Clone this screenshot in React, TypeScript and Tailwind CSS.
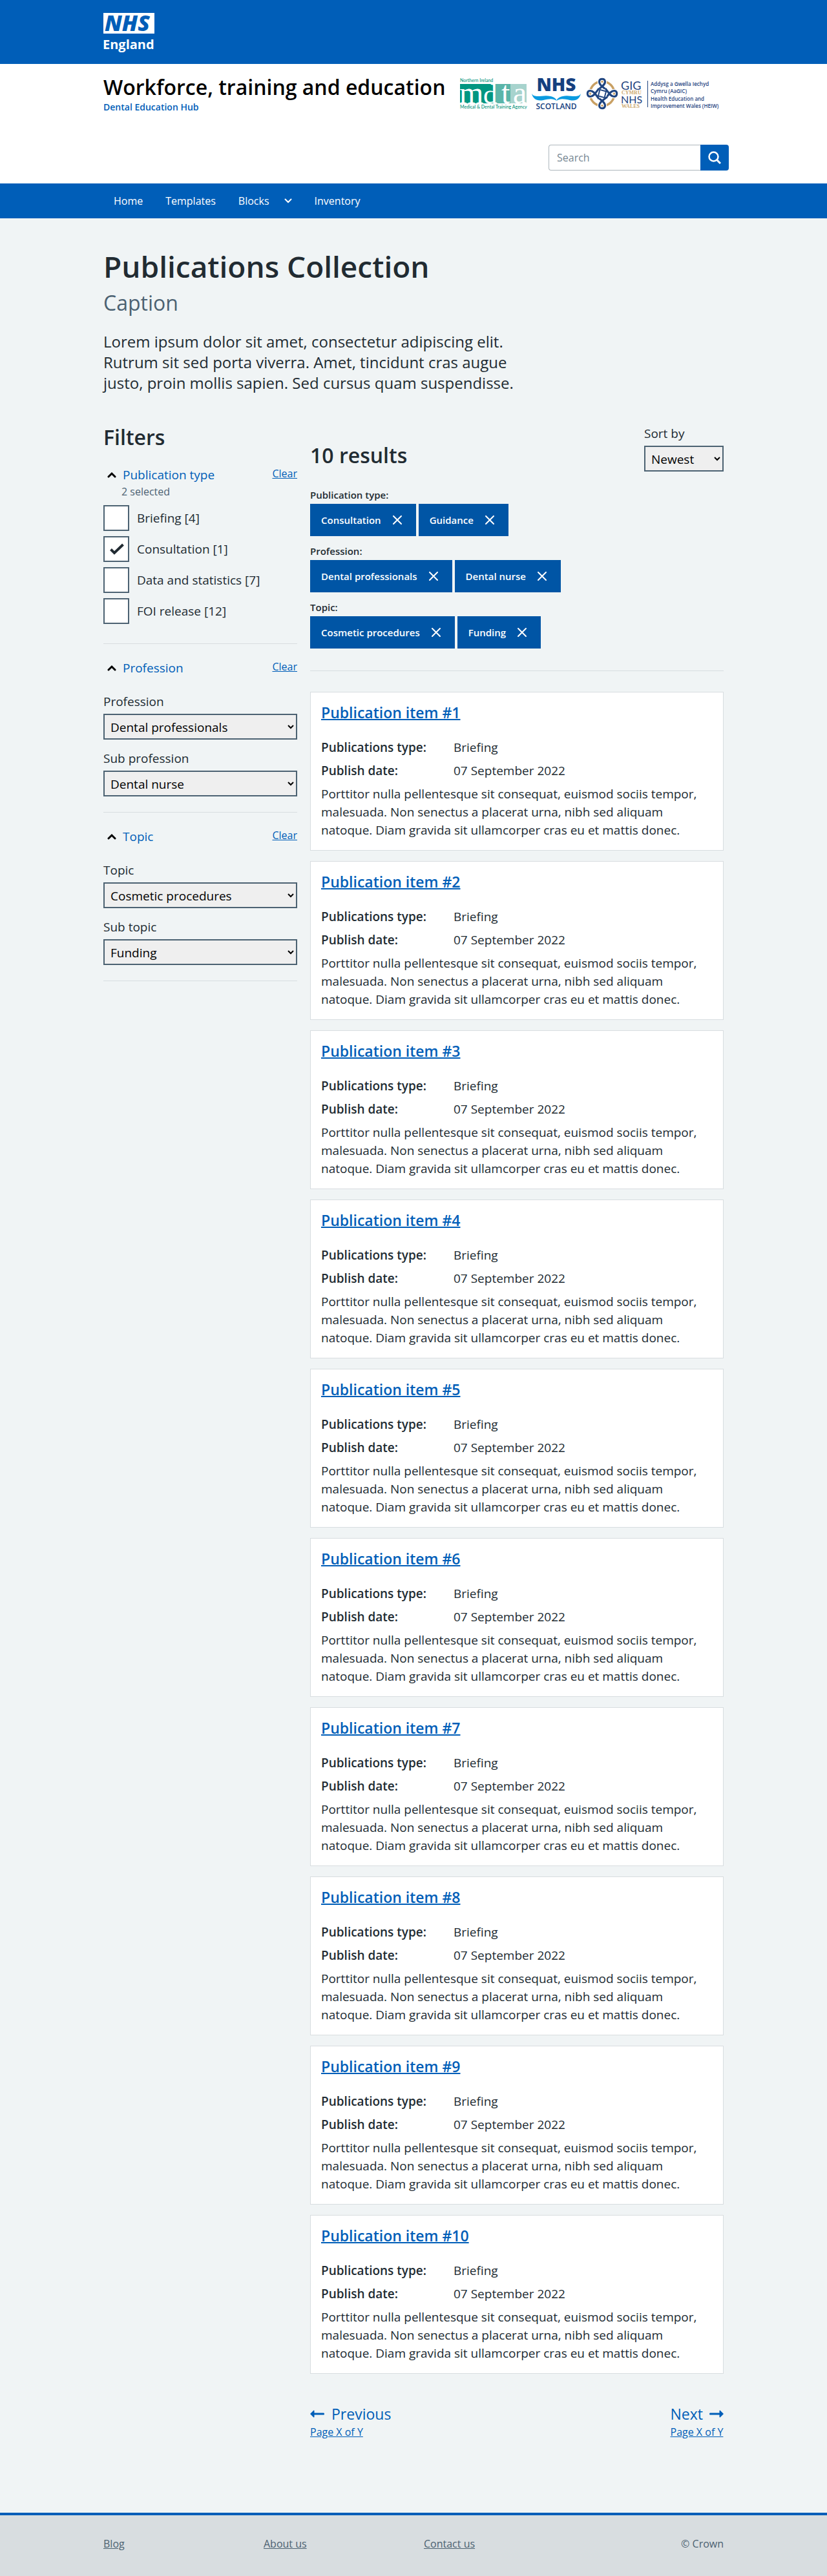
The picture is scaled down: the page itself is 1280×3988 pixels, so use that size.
import type { ReactNode } from "react";

const results = Array.from({ length: 10 }, (_, i) => `Publication item #${i + 1}`);

const publicationTypes = [
  { label: "Briefing [4]", checked: false },
  { label: "Consultation [1]", checked: true },
  { label: "Data and statistics [7]", checked: false },
  { label: "FOI release [12]", checked: false },
];

const activeFilters = [
  { name: "Publication type:", tags: ["Consultation", "Guidance"] },
  { name: "Profession:", tags: ["Dental professionals", "Dental nurse"] },
  { name: "Topic:", tags: ["Cosmetic procedures", "Funding"] },
];

function EnglandLogo() {
  return (
    <svg width="80" height="64" viewBox="0 0 80 64" className="overflow-visible" role="img" aria-label="NHS England">
      <rect x="0" y="0" width="79" height="32" fill="#fff" />
      <text x="2" y="28" fill="#005eb8" fontFamily="Open Sans" fontWeight="800" fontStyle="italic" fontSize="34">NHS</text>
      <text x="-1" y="56" fill="#fff" fontFamily="Open Sans" fontWeight="700" fontSize="20">England</text>
    </svg>
  );
}

function PartnerLogos() {
  return (
    <svg width="408" height="52" viewBox="0 0 408 52" className="overflow-visible" role="img" aria-label="Partner organisations">
      {/* Northern Ireland Medical & Dental Training Agency */}
      <g fontFamily="Lato" fontSize="7" fontWeight="500" fill="#008f78">
        <text x="0" y="8">Northern Ireland</text>
        <text x="0" y="49">Medical &amp; Dental Training Agency</text>
      </g>
      <rect x="0" y="11" width="53" height="30" fill="#009681" />
      <rect x="53" y="11" width="25" height="30" fill="#5bb5a9" />
      <rect x="78" y="11" width="25" height="30" fill="#a7d3cd" />
      <g fontFamily="Liberation Serif" fill="#fff">
        <text x="-1" y="41" fontSize="48">m</text>
        <text x="36" y="41" fontSize="43">d</text>
        <text x="64" y="41" fontSize="48">t</text>
        <text x="82" y="41" fontSize="48">a</text>
      </g>
      {/* NHS Scotland */}
      <text x="149" y="22" textAnchor="middle" fontFamily="Open Sans" fontWeight="800" fontSize="28" fill="#15407f">NHS</text>
      <path d="M111 26C116 34 129 27 140 30C146 31.500 149 34 149.500 37C144 33 138 34 129 36C119 38 113 34 111 26Z" fill="#0a9be0" />
      <path d="M187 26C182 34 169 27 159 30C153 31.500 150 34 149.500 37C155 33 161 34 170 36C180 38 185 34 187 26Z" fill="#0a9be0" />
      <text x="149" y="50" textAnchor="middle" fontFamily="Open Sans" fontWeight="600" fontSize="12" fill="#15407f">SCOTLAND</text>
      {/* NHS Wales, Health Education and Improvement Wales */}
      <g transform="translate(220 26)" fill="none">
        <circle r="19" stroke="#c9a063" strokeWidth="3.500" />
        {[0, 90, 180, 270].map((angle) => (
          <g key={angle} transform={`rotate(${angle})`}>
            <path d="M-8 -5C-3 -9 5 -13 4.500 -19C4 -24 -4 -24 -4.500 -19C-5 -13 3 -9 8 -5" stroke="#fff" strokeWidth="5.500" />
            <path d="M-8 -5C-3 -9 5 -13 4.500 -19C4 -24 -4 -24 -4.500 -19C-5 -13 3 -9 8 -5" stroke="#1f447f" strokeWidth="3" />
          </g>
        ))}
        <rect x="-5" y="-5" width="10" height="10" transform="rotate(15)" stroke="#1f447f" strokeWidth="2" fill="#fff" />
      </g>
      <g fontFamily="Lato" fill="#1f447f">
        <text x="249" y="20" fontSize="18">GIG</text>
        <text x="249" y="41" fontSize="16">NHS</text>
      </g>
      <g fontFamily="Liberation Serif" fontSize="8" fontWeight="700" fill="#cda970">
        <text x="250" y="27">CYMRU</text>
        <text x="250" y="48">WALES</text>
      </g>
      <path d="M290.500 6V47" stroke="#1f447f" strokeWidth="1" />
      <g fontFamily="Open Sans" fontSize="8" fontWeight="600" fill="#1f447f">
        <text x="295" y="14">Addysg a Gwella Iechyd</text>
        <text x="295" y="25">Cymru (AaGIC)</text>
        <text x="295" y="37">Health Education and</text>
        <text x="295" y="48">Improvement Wales (HEIW)</text>
      </g>
    </svg>
  );
}

function Container({ children, className = "" }: { children: ReactNode; className?: string }) {
  return <div className={`mx-auto w-full max-w-[960px] ${className}`}>{children}</div>;
}

function SelectField({ id, label, value, className = "" }: { id: string; label: string; value: string; className?: string }) {
  return (
    <div className={className}>
      <label htmlFor={id} className="mb-[5px] block">
        {label}
      </label>
      <select id={id} className="block h-10 w-full border-2 border-[#4c6272] bg-[#efefef] p-[5px] text-black">
        <option>{value}</option>
      </select>
    </div>
  );
}

function FilterGroup({ title, note, children }: { title: string; note?: string; children: ReactNode }) {
  return (
    <section className="mb-[23px] border-b border-[#d8dde0]">
      <div className="flex items-start justify-between">
        <button type="button" className="flex items-center gap-2.5 pl-1.5 text-[#005eb8]">
          <svg width="14" height="10" viewBox="0 0 14 10" fill="none" stroke="#000" strokeWidth="3" strokeLinecap="round" aria-hidden="true">
            <path d="M2 8L7 3L12 8" />
          </svg>
          {title}
        </button>
        <a href="#clear" className="text-base leading-6 text-[#005eb8] underline">
          Clear
        </a>
      </div>
      {note && <p className="pl-7 text-base leading-6 text-[#4c6272]">{note}</p>}
      {children}
    </section>
  );
}

function Tag({ label }: { label: string }) {
  return (
    <button type="button" className="flex h-[50px] items-center gap-[18px] bg-[#0055a5] pr-[22px] pl-[17px] text-[15px] font-semibold text-white">
      {label}
      <svg width="14" height="14" viewBox="0 0 14 14" stroke="currentColor" strokeWidth="2" strokeLinecap="round" aria-hidden="true">
        <path d="M1 1L13 13M13 1L1 13" />
      </svg>
    </button>
  );
}

function ResultCard({ title }: { title: string }) {
  return (
    <article className="border border-[#d8dde0] bg-white px-4 pt-[15px] pb-[17px]">
      <h3 className="mb-6 text-[23px] leading-8 font-semibold">
        <a href="#item" className="text-[#005eb8] underline decoration-2">
          {title}
        </a>
      </h3>
      <dl className="grid grid-cols-[205px_1fr] gap-y-2">
        <dt className="font-semibold">Publications type:</dt>
        <dd>Briefing</dd>
        <dt className="font-semibold">Publish date:</dt>
        <dd>07 September 2022</dd>
      </dl>
      <p className="mt-2">
        Porttitor nulla pellentesque sit consequat, euismod sociis tempor, malesuada. Non senectus a placerat urna, nibh
        sed aliquam natoque. Diam gravida sit ullamcorper cras eu et mattis donec.
      </p>
    </article>
  );
}

function Arrow({ className = "" }: { className?: string }) {
  return (
    <svg width="22" height="12" viewBox="0 0 22 12" className={className} fill="currentColor" aria-hidden="true">
      <path d="M0 6L5.500 0.500Q6.500 0.300 6.500 1.500V4.500H21Q22 4.500 22 6T21 7.500H6.500V10.500Q6.500 11.700 5.500 11.500Z" />
    </svg>
  );
}

export default function App() {
  return (
    <div className="bg-[#f0f4f5] font-['Open_Sans',sans-serif] text-[19px] leading-7 text-[#212b32]">
      <div className="bg-[#005eb8]">
        <Container className="h-[99px] pt-5">
          <EnglandLogo />
        </Container>
      </div>

      <header className="bg-white">
        <Container className="flex justify-between pt-4 pb-5">
          <div>
            <p className="text-[32px] leading-10 font-semibold whitespace-nowrap text-black">Workforce, training and education</p>
            <p className="text-sm leading-[22px] font-semibold text-[#005eb8]">Dental Education Hub</p>
          </div>
          <div className="-mr-2 flex flex-col items-end gap-[53px] pt-1">
            <div className="pr-2">
              <PartnerLogos />
            </div>
            <form className="flex" role="search">
              <input
                type="search"
                aria-label="Search"
                placeholder="Search"
                className="h-10 w-[235px] rounded-l border border-r-0 border-[#aeb7bd] bg-white pl-3 text-base outline-none placeholder:text-[#768692]"
              />
              <button type="button" aria-label="Submit search" className="grid h-10 w-11 place-items-center rounded-r bg-[#005eb8]">
                <svg width="20" height="20" viewBox="0 0 20 20" fill="none" stroke="#fff" strokeWidth="2.500" aria-hidden="true">
                  <circle cx="8.500" cy="8.500" r="7" />
                  <path d="M13.500 13.500L19 19" strokeWidth="3" />
                </svg>
              </button>
            </form>
          </div>
        </Container>
      </header>

      <nav className="bg-[#005eb8] text-base text-white">
        <Container className="flex h-[54px] items-center gap-[35px] pl-4">
          <a href="#home">Home</a>
          <a href="#templates">Templates</a>
          <button type="button" className="flex items-center gap-[23px]">
            Blocks
            <svg width="12" height="8" viewBox="0 0 12 8" fill="none" stroke="#fff" strokeWidth="2" strokeLinecap="round" aria-hidden="true">
              <path d="M1.500 1.500L6 6L10.500 1.500" />
            </svg>
          </button>
          <a href="#inventory">Inventory</a>
        </Container>
      </nav>

      <main>
        <Container className="pt-[46px] pb-[113px]">
          <h1 className="mb-[9px] text-[46px] leading-[56px] font-semibold">Publications Collection</h1>
          <p className="mb-6 text-[32px] leading-10 text-[#4c6272]">Caption</p>
          <p className="max-w-[640px] text-2xl leading-8">
            Lorem ipsum dolor sit amet, consectetur adipiscing elit. Rutrum sit sed porta viverra. Amet, tincidunt cras
            augue justo, proin mollis sapien. Sed cursus quam suspendisse.
          </p>

          <div className="mt-12 grid grid-cols-[300px_1fr] items-start gap-5">
            <aside>
              <h2 className="mb-6 text-[32px] leading-10 font-semibold">Filters</h2>
              <FilterGroup title="Publication type" note="2 selected">
                <div className="mt-[9px] mb-[30px] flex flex-col gap-2">
                  {publicationTypes.map((type) => (
                    <label key={type.label} className="relative flex items-center gap-3">
                      <input
                        type="checkbox"
                        defaultChecked={type.checked}
                        className="peer size-10 appearance-none border-2 border-[#4c6272] bg-white"
                      />
                      <svg
                        width="24"
                        height="20"
                        viewBox="0 0 24 20"
                        fill="none"
                        stroke="#212b32"
                        strokeWidth="4"
                        className="absolute top-2.5 left-2 hidden peer-checked:block"
                        aria-hidden="true"
                      >
                        <path d="M3.500 10.500L9 16L22.500 3" />
                      </svg>
                      {type.label}
                    </label>
                  ))}
                </div>
              </FilterGroup>
              <FilterGroup title="Profession">
                <SelectField id="profession" label="Profession" value="Dental professionals" className="mt-6 mb-[15px]" />
                <SelectField id="sub-profession" label="Sub profession" value="Dental nurse" className="mb-6" />
              </FilterGroup>
              <FilterGroup title="Topic">
                <SelectField id="topic" label="Topic" value="Cosmetic procedures" className="mt-6 mb-[15px]" />
                <SelectField id="sub-topic" label="Sub topic" value="Funding" className="mb-6" />
              </FilterGroup>
            </aside>

            <div>
              <div className="mb-6 flex items-end justify-between">
                <h2 className="mb-[5px] text-[32px] leading-10 font-semibold">10 results</h2>
                <SelectField id="sort" label="Sort by" value="Newest" className="w-[123px]" />
              </div>

              <div className="flex flex-col gap-[11px] border-b border-[#d8dde0] pb-[34px]">
                {activeFilters.map((group) => (
                  <div key={group.name}>
                    <p className="mb-0.5 text-[15px] leading-6 font-semibold">{group.name}</p>
                    <div className="flex gap-1">
                      {group.tags.map((tag) => (
                        <Tag key={tag} label={tag} />
                      ))}
                    </div>
                  </div>
                ))}
              </div>

              <div className="mt-8 flex flex-col gap-4">
                {results.map((title) => (
                  <ResultCard key={title} title={title} />
                ))}
              </div>

              <nav className="mt-[46px] flex justify-between text-[#005eb8]" aria-label="Pagination">
                <a href="#previous" className="block">
                  <span className="flex items-center gap-[11px] text-[23px] leading-8">
                    <Arrow />
                    Previous
                  </span>
                  <span className="block text-base leading-6 underline">Page X of Y</span>
                </a>
                <a href="#next" className="block">
                  <span className="flex items-center justify-end gap-2.5 text-[23px] leading-8">
                    Next
                    <Arrow className="rotate-180" />
                  </span>
                  <span className="block text-base leading-6 underline">Page X of Y</span>
                </a>
              </nav>
            </div>
          </div>
        </Container>
      </main>

      <footer className="border-t-4 border-[#005eb8] bg-[#d8dde0] text-base leading-6 text-[#4c6272]">
        <Container className="grid grid-cols-4 gap-8 pt-8 pb-[38px]">
          <div><a href="#blog" className="underline">Blog</a></div>
          <div><a href="#about" className="underline">About us</a></div>
          <div><a href="#contact" className="underline">Contact us</a></div>
          <p className="text-right">© Crown</p>
        </Container>
      </footer>
    </div>
  );
}
